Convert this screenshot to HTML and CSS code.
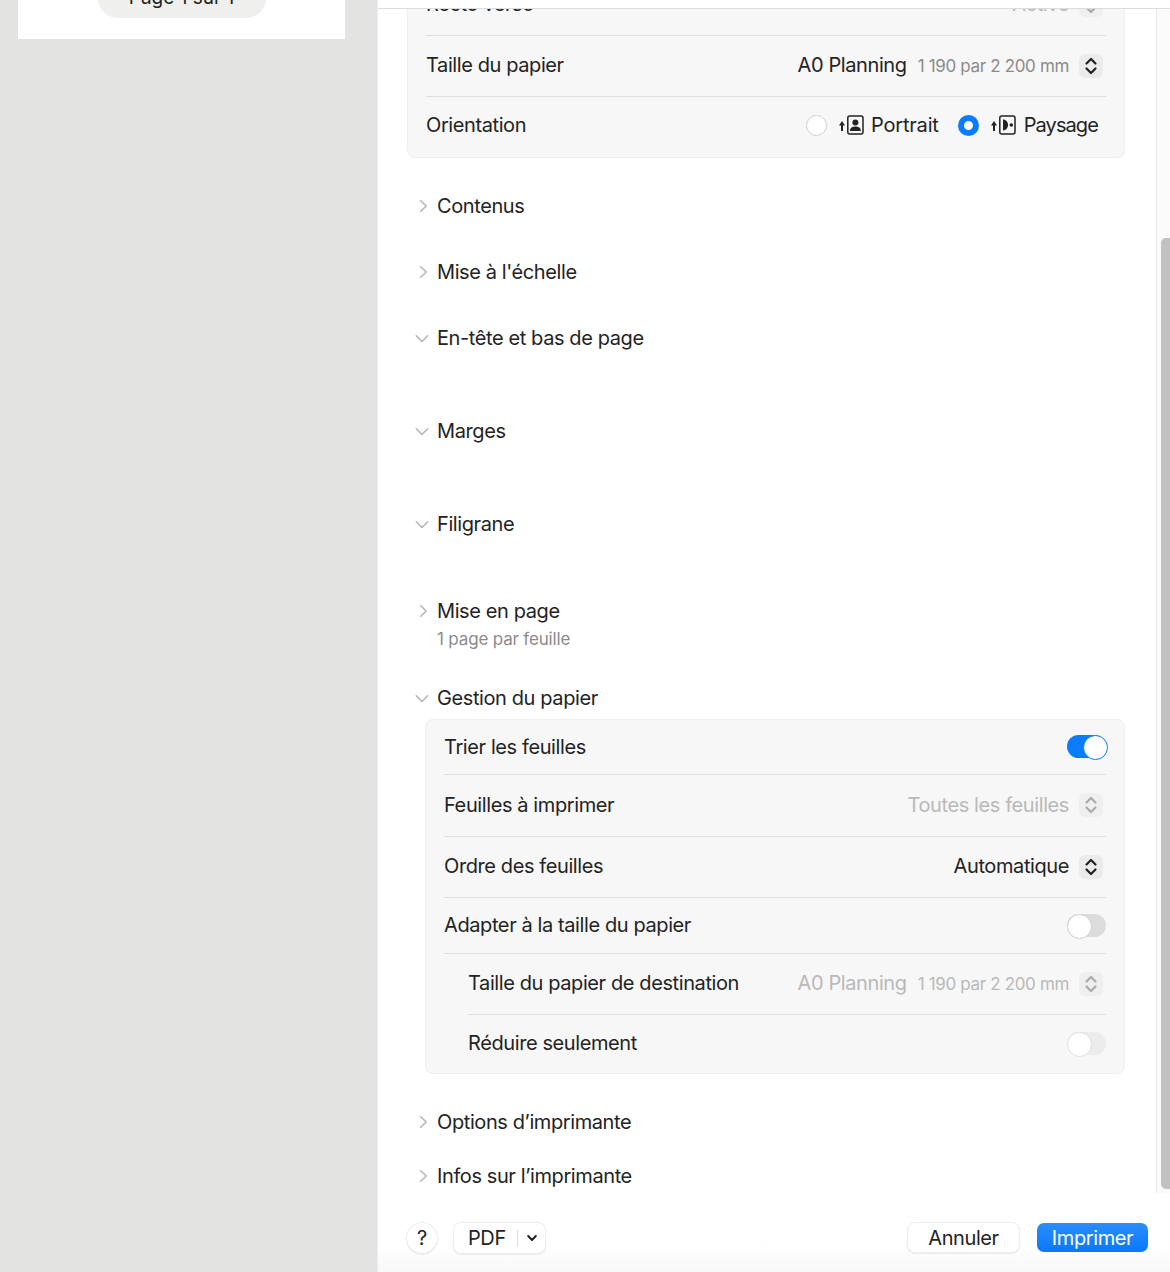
FILE: index.html
```html
<!DOCTYPE html>
<html lang="fr">
<head>
<meta charset="utf-8">
<title>Imprimer</title>
<link rel="stylesheet" href="styles.css">
</head>
<body>
<svg class="defs" width="0" height="0" aria-hidden="true">
  <symbol id="stepper" viewBox="0 0 24 24"><path d="M7.500 9.500 12 5l4.500 4.500M7.500 14.500 12 19l4.500-4.500" fill="none" stroke="currentColor" stroke-width="2.200" stroke-linecap="round" stroke-linejoin="round"/></symbol>
  <symbol id="chev-r" viewBox="0 0 16 16"><path d="M6.500 2 12.800 8l-6.300 6" fill="none" stroke="currentColor" stroke-width="1.800" stroke-linecap="round" stroke-linejoin="round"/></symbol>
  <symbol id="chev-d" viewBox="0 0 16 16"><path d="M1.500 5.500 8 12l6.500-6.500" fill="none" stroke="currentColor" stroke-width="1.800" stroke-linecap="round" stroke-linejoin="round"/></symbol>
</svg>
<div class="app">
  <aside class="preview">
    <div class="sheet"><div class="pager">Page 1 sur 1</div></div>
  </aside>
  <main class="panel">
    <div class="topbar"></div>
    <div class="middle">
      <div class="scroll">
        <section class="group group-first">
          <div class="row r-first"><span>Recto verso</span><span class="val off">Activé<svg class="step"><use href="#stepper"/></svg></span></div>
          <div class="row r-61"><span>Taille du papier</span><span class="val">A0 Planning<small>1 190 par 2 200 mm</small><svg class="step"><use href="#stepper"/></svg></span></div>
          <div class="row r-last1">
            <span>Orientation</span>
            <span class="orient">
              <span class="radio"></span>
              <svg class="oicon" viewBox="0 0 26 20"><path d="M1 10.500 4 6l3 4.500z" fill="#222"/><path d="M4 9v7" fill="none" stroke="#222" stroke-width="2"/><rect x="9.800" y="1" width="15.200" height="18" rx="2" fill="none" stroke="#222" stroke-width="1.500"/><circle cx="17.400" cy="7.500" r="3" fill="#222"/><path d="M12 16c0-3.500 2.500-4.500 5.400-4.500s5.400 1 5.400 4.500z" fill="#222"/></svg>
              <span class="olabel olabel-p">Portrait</span>
              <span class="radio on"></span>
              <svg class="oicon" viewBox="0 0 26 20"><path d="M1 10.500 4 6l3 4.500z" fill="#222"/><path d="M4 9v7" fill="none" stroke="#222" stroke-width="2"/><rect x="9.800" y="1" width="15.200" height="18" rx="2" fill="none" stroke="#222" stroke-width="1.500"/><circle cx="21.300" cy="10" r="1.800" fill="#222"/><path d="M13 4.600c3 0 5 2.500 5 5.400s-2 5.400-5 5.400z" fill="#222"/></svg>
              <span class="olabel olabel-l">Paysage</span>
            </span>
          </div>
        </section>

        <div class="sec sec-first"><svg class="chev"><use href="#chev-r"/></svg>Contenus</div>
        <div class="sec"><svg class="chev"><use href="#chev-r"/></svg>Mise à l'échelle</div>
        <div class="sec sec-open"><svg class="chev"><use href="#chev-d"/></svg>En-tête et bas de page</div>
        <div class="sec sec-open"><svg class="chev"><use href="#chev-d"/></svg>Marges</div>
        <div class="sec sec-fil"><svg class="chev"><use href="#chev-d"/></svg>Filigrane</div>
        <div class="sec sec-flat"><svg class="chev"><use href="#chev-r"/></svg>Mise en page</div>
        <div class="sub">1 page par feuille</div>
        <div class="sec sec-tight"><svg class="chev"><use href="#chev-d"/></svg>Gestion du papier</div>

        <section class="group group-second">
          <div class="row r-55"><span>Trier les feuilles</span><span class="toggle on"></span></div>
          <div class="row r-62"><span>Feuilles à imprimer</span><span class="val off">Toutes les feuilles<svg class="step"><use href="#stepper"/></svg></span></div>
          <div class="row r-61"><span>Ordre des feuilles</span><span class="val">Automatique<svg class="step"><use href="#stepper"/></svg></span></div>
          <div class="row r-56"><span>Adapter à la taille du papier</span><span class="toggle"></span></div>
          <div class="row r-61 indent"><span>Taille du papier de destination</span><span class="val off">A0 Planning<small>1 190 par 2 200 mm</small><svg class="step"><use href="#stepper"/></svg></span></div>
          <div class="row r-last2 indent"><span>Réduire seulement</span><span class="toggle dim"></span></div>
        </section>

        <div class="sec sec-after"><svg class="chev"><use href="#chev-r"/></svg>Options d’imprimante</div>
        <div class="sec"><svg class="chev"><use href="#chev-r"/></svg>Infos sur l’imprimante</div>
      </div>
      <div class="track"><div class="thumb"></div></div>
    </div>
    <footer class="footer">
      <button class="btn help">?</button>
      <div class="btn pdf"><span class="pdf-label">PDF</span><span class="pdf-sep"></span><svg class="pdf-chev" viewBox="0 0 12 12"><path d="M2.200 4 6 8l3.800-4" fill="none" stroke="#222" stroke-width="2" stroke-linecap="round" stroke-linejoin="round"/></svg></div>
      <span class="spacer"></span>
      <button class="btn cancel">Annuler</button>
      <button class="btn print">Imprimer</button>
    </footer>
  </main>
</div>
</body>
</html>
```

FILE: styles.css
```css
* { box-sizing: border-box; }
html, body { margin: 0; height: 100%; background: #fff; }
body { font-family: Inter, "Liberation Sans", sans-serif; font-size: 20px; color: #232323; overflow: hidden; }
.defs { position: absolute; }
.app { display: flex; width: 1170px; height: 1272px; overflow: hidden; }

.preview { width: 377px; flex: none; background: #e3e3e1; padding: 0 32px 0 18px; }
.sheet { height: 39px; background: #fff; overflow: hidden; display: flex; justify-content: center; }
.pager { width: 168px; height: 42px; margin-top: -24px; border-radius: 20px; background: #efefed; display: flex; align-items: center; justify-content: center; color: #222; font-size: 19px; flex: none; }

.panel { flex: 1; min-width: 0; display: flex; flex-direction: column; border-left: 1px solid #ececea; }
.topbar { height: 9px; flex: none; background: #fff; border-bottom: 1px solid #dcdcdc; }
.middle { display: flex; height: 1184px; flex: none; }
.scroll { flex: 1; min-width: 0; overflow: hidden; padding: 0 31px 0 29px; }
.track { width: 14px; flex: none; border-left: 1px solid #e8e8e8; background: #fafafa; padding: 229px 0 4px 4px; }
.thumb { height: 951px; background: #c1c1c1; border-radius: 5px 0 0 5px; }

.group { background: #f7f7f7; border: 1px solid #efefef; border-radius: 8px; padding: 0 18px; }
.group-first { margin-top: -35px; border-top: 0; padding-top: 1px; }
.group-second { margin-left: 18px; }

.row { display: flex; align-items: center; justify-content: space-between; border-bottom: 1px solid #dfdfdf; letter-spacing: -0.020em; padding-bottom: 2px; }
.r-first { height: 61px; }
.r-55 { height: 55px; padding-bottom: 0; }
.r-56 { height: 56px; padding-bottom: 1px; }
.r-61 { height: 61px; }
.r-62 { height: 62px; }
.r-last1 { height: 60px; border-bottom: 0; padding-bottom: 4px; }
.r-last2 { height: 58px; border-bottom: 0; }
.indent { margin-left: 24px; }

.val { display: flex; align-items: center; padding-right: 3px; color: #232323; }
.val small { font-size: 17px; color: #8b8b8b; margin: 2px 0 0 11px; letter-spacing: -0.020em; }
.val.off, .val.off small { color: #b9b9b9; }
.val.off .step { color: #aaa; background: #efefef; }
.step { width: 24px; height: 24px; margin: 2px 0 0 10px; border-radius: 6px; background: #ebebeb; color: #222; flex: none; }
.r-62 .step { margin-top: 0; }

.orient { display: flex; align-items: center; padding-right: 8px; }
.radio { width: 21px; height: 21px; border-radius: 50%; background: #fff; border: 1px solid #cfcfcf; flex: none; }
.radio.on { background: #fff; border: 6px solid #0a7cff; margin-left: 19px; }
.oicon { width: 26px; height: 20px; margin-left: 11px; flex: none; }
.olabel { margin-left: 7px; }
.olabel-p { letter-spacing: -0.010em; }
.olabel-l { margin-left: 8px; letter-spacing: -0.045em; }

.sec { display: flex; align-items: center; height: 34px; margin-bottom: 32px; letter-spacing: -0.020em; padding-left: 8px; color: #232323; }
.chev { width: 14px; height: 14px; color: #b5b5b5; margin-right: 8px; flex: none; }
.sec-first { margin-top: 31px; }
.sec-open { margin-bottom: 59px; }
.sec-fil { margin-bottom: 53px; }
.sec-flat { margin-bottom: 0; }
.sec-tight { margin-bottom: 4px; }
.sec-after { margin-top: 31px; margin-bottom: 20px; }
.sub { height: 22px; line-height: 22px; margin-bottom: 31px; padding-left: 30px; font-size: 17px; letter-spacing: -0.010em; color: #8b8b8b; }

.toggle { width: 39px; height: 23px; border-radius: 12px; background: #dcdcdc; position: relative; flex: none; }
.toggle::after { content: ""; position: absolute; left: 0; top: 0; width: 23px; height: 23px; border-radius: 50%; background: #fff; border: 1px solid #cfcfcf; }
.toggle.on { background: #0a7cff; margin-bottom: 2px; }
.toggle.on::after { left: 16px; border: 1px solid #0a7cff; }
.toggle.dim { background: #ececec; }
.toggle.dim::after { border-color: #e0e0e0; }

.footer { flex: 1; display: flex; align-items: flex-start; padding: 30px 22px 0 29px; background: linear-gradient(#fff 0, #fff 65%, #f8f8f8 100%); }
.btn { font: inherit; font-size: 20px; letter-spacing: -0.020em; color: #232323; background: #fff; border: 0; box-shadow: 0 0 0 1px #ededed, 0 1px 2px rgba(0, 0, 0, .22); padding: 0; height: 29px; border-radius: 7px; }
.help { width: 30px; height: 30px; border-radius: 50%; margin-right: 17px; }
.pdf { width: 91px; height: 30px; display: flex; align-items: center; }
.pdf-label { margin-left: 14px; width: 49px; }
.pdf-sep { width: 1px; height: 17px; background: #ddd; }
.pdf-chev { width: 12px; height: 12px; margin-left: 8px; }
.spacer { flex: 1; }
.cancel { width: 111px; margin-right: 18px; }
.print { width: 111px; color: #fff; background: linear-gradient(#2a8dff, #0a78fb); box-shadow: none; }
```
